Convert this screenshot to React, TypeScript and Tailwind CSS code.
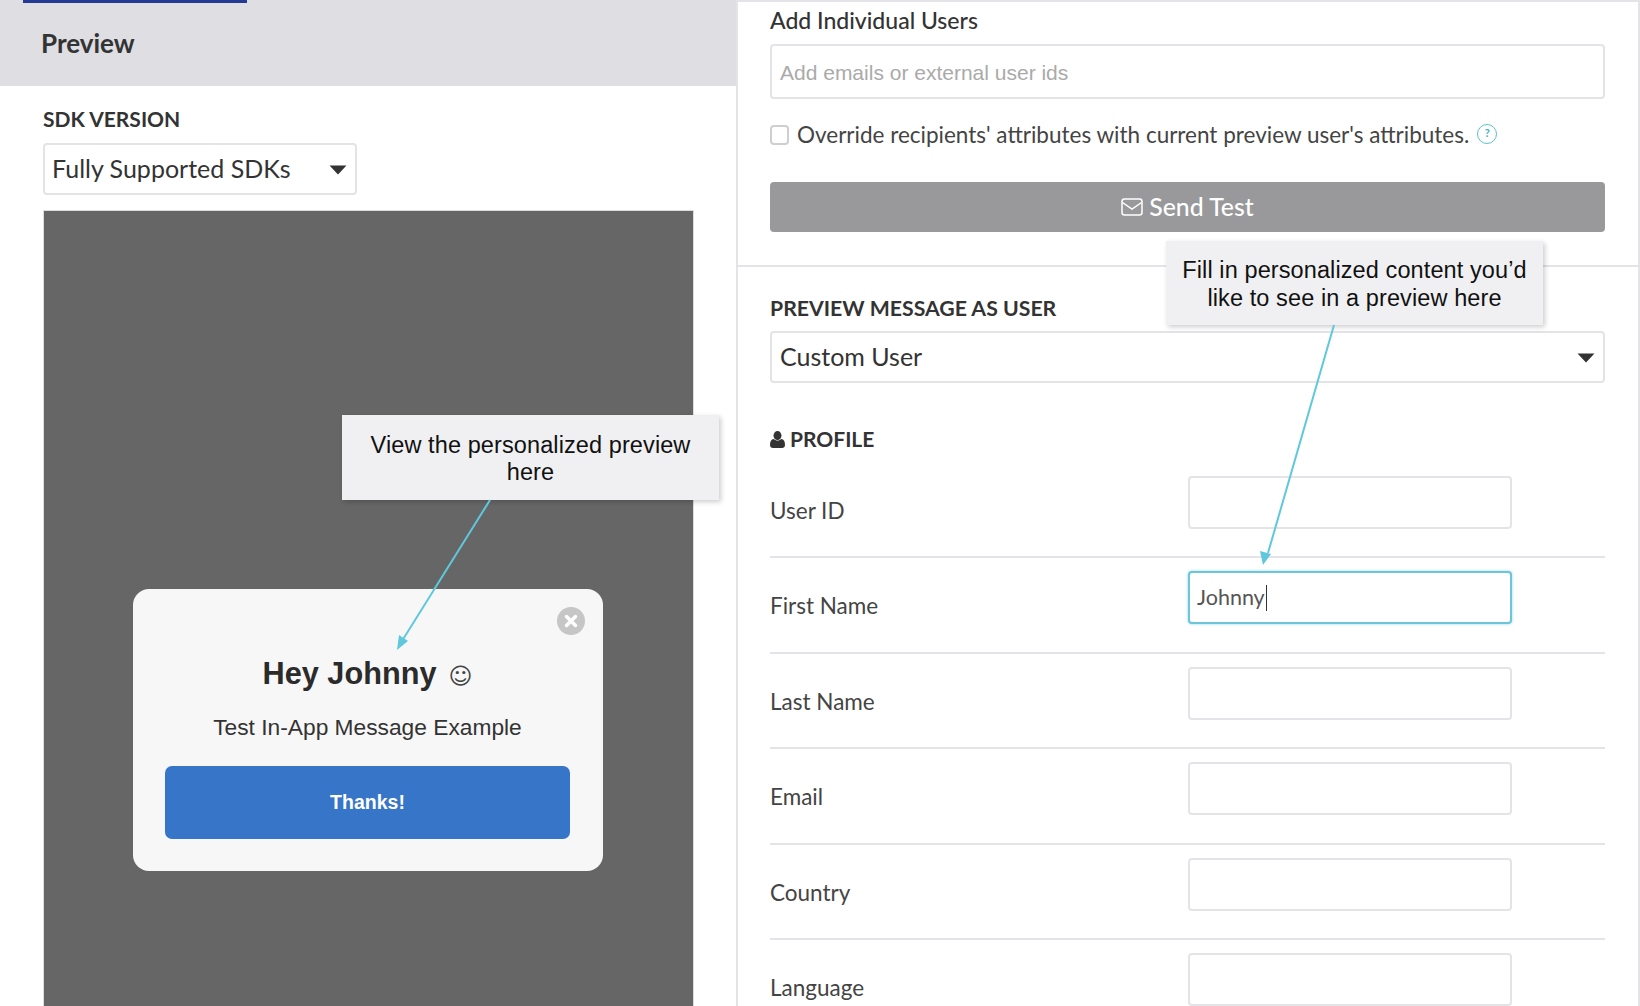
const labelFont = "font-['Lato','Liberation_Sans',sans-serif]";

function Caret() {
  return (
    <svg width="18" height="10" viewBox="0 0 18 10" className="mt-[2px] shrink-0">
      <path d="M0.5 0.5h17L9 9.5z" fill="#333" />
    </svg>
  );
}

function MailIcon() {
  return (
    <svg width="22" height="18" viewBox="0 0 22 18" fill="none" stroke="#fff" strokeWidth="1.5">
      <rect x="1" y="1" width="20" height="16" rx="2.5" />
      <path d="M1.5 4.5 11 11l9.5-6.5" />
    </svg>
  );
}

function UserIcon() {
  return (
    <svg width="15" height="17" viewBox="0 0 15 17" fill="#333">
      <ellipse cx="7.5" cy="4.6" rx="4" ry="4.5" />
      <path d="M0 14c0-3.6 1.2-5.6 3.6-5.9 1 .9 2.4 1.5 3.9 1.5s2.9-.6 3.9-1.5C13.800 8.400 15 10.400 15 14c0 2-1.300 3-3 3H3c-1.700 0-3-1-3-3z" />
    </svg>
  );
}

function Callout({ className, lines }: { className: string; lines: string[] }) {
  return (
    <div
      className={`absolute z-10 flex flex-col items-center justify-center bg-[#f0f0f2] pt-[3px] text-[23.5px] leading-[27.500px] tracking-[0.1px] text-[#111] font-['Liberation_Sans',sans-serif] shadow-[2px_2px_5px_rgba(0,0,0,0.2)] ${className}`}
    >
      {lines.map((line) => (
        <span key={line}>{line}</span>
      ))}
    </div>
  );
}

function ProfileRow({ label, value, last }: { label: string; value?: string; last?: boolean }) {
  const focused = value !== undefined;
  return (
    <div
      className={`flex h-[95.500px] shrink-0 items-start justify-between pr-[93px] pt-[13px] ${last ? "" : "border-b-2 border-[#e4e4e8]"}`}
    >
      <span className="mt-[22px] text-[22.500px] leading-[26px] text-[#444]">{label}</span>
      <div
        className={`flex h-[53px] w-[324px] items-center rounded-[4px] bg-white pl-[7px] text-[21.500px] text-[#555] ${
          focused
            ? "border-2 border-[#6cc5d8] shadow-[0_0_3px_rgba(108,197,216,0.7)]"
            : "border-2 border-[#e4e4e8]"
        }`}
      >
        {value}
        {focused && <span className="ml-px h-[26px] w-px bg-[#333]" />}
      </div>
    </div>
  );
}

export default function App() {
  return (
    <div className={`relative flex h-[1006px] w-[1640px] overflow-hidden bg-white text-[#333] ${labelFont}`}>
      <div className="flex w-[738px] shrink-0 flex-col border-r-2 border-[#e4e4e8]">
        <div className="h-[86px] shrink-0 bg-[#dedee3]">
          <div className="ml-[23px] h-[3px] w-[224px] bg-[#263a93]" />
          <h1 className="pl-[41px] pt-[25px] text-[26px] font-bold leading-[30px] text-[#333]">Preview</h1>
        </div>
        <div className="flex min-h-0 flex-1 flex-col pl-[43px] pt-[21px]">
          <div className="text-[21px] font-bold leading-[24px] text-[#333]">SDK VERSION</div>
          <div className="mt-[12px] flex h-[52px] w-[314px] items-center justify-between rounded-[4px] border-2 border-[#e4e4e8] pl-[7px] pr-[8px] text-[25px]">
            Fully Supported SDKs
            <Caret />
          </div>
          <div className="mt-[15px] flex min-h-0 w-[651px] flex-1 justify-center border border-b-0 border-[#dddddd] bg-[#666666] pr-[2px] pt-[378px]">
            <div className="relative flex h-[282px] w-[470px] flex-col items-center rounded-[16px] bg-[#f7f7f7] font-['Liberation_Sans',sans-serif]">
              <div className="absolute right-[18px] top-[18px] flex h-[28px] w-[28px] items-center justify-center rounded-full bg-[#c6c6c6]">
                <svg width="14" height="14" viewBox="0 0 14 14" stroke="#fff" strokeWidth="3.500" strokeLinecap="round">
                  <path d="M2.500 2.500l9 9M11.500 2.500l-9 9" />
                </svg>
              </div>
              <div className="mt-[64px] flex items-center text-[30.700px] font-bold leading-[36px] text-[#2b2b2b]">
                Hey Johnny
                <span className="ml-[12px] mt-[5px] font-['DejaVu_Sans',sans-serif] text-[23px] font-normal leading-[36px] text-[#444]">☺</span>
              </div>
              <p className="mt-[19px] text-[22.750px] leading-[28px] text-[#333]">Test In-App Message Example</p>
              <div className="mt-[25px] flex h-[73px] w-[405px] items-center justify-center rounded-[7px] bg-[#3675c8] text-[19.500px] font-bold text-white">
                Thanks!
              </div>
            </div>
          </div>
        </div>
      </div>

      <div className="flex min-w-0 flex-1 flex-col border-r-2 border-t-2 border-[#e4e4e8]">
        <div className="h-[265px] shrink-0 border-b-2 border-[#e4e4e8] pl-[32px] pr-[33px] pt-[5px]">
          <div className="text-[23px] font-medium leading-[26px] text-[#333]">Add Individual Users</div>
          <div className="mt-[11px] flex h-[55px] items-center rounded-[4px] border-2 border-[#e4e4e8] pl-[8px] pt-[2px] font-['Liberation_Sans',sans-serif] text-[21px] text-[#aaaaaa]">
            Add emails or external user ids
          </div>
          <div className="mt-[23px] flex items-center">
            <span className="h-[20px] w-[19px] rounded-[4px] border-2 border-[#cfcfd3]" />
            <span className="ml-[8px] text-[22.500px] leading-[26px] text-[#444]">
              Override recipients' attributes with current preview user's attributes.
            </span>
            <span className="ml-[8px] mb-[3px] flex h-[20px] w-[20px] items-center justify-center rounded-full border border-[#5cc2cf] text-[11px] font-bold text-[#3bb3c3]">
              ?
            </span>
          </div>
          <div className="mt-[34px] flex h-[50px] items-center justify-center gap-[6px] rounded-[4px] bg-[#99999b] text-[24.800px] font-medium text-white">
            <MailIcon />
            Send Test
          </div>
        </div>

        <div className="flex min-h-0 flex-1 flex-col pl-[32px] pr-[33px] pt-[29px]">
          <div className="text-[21.250px] font-bold leading-[24px] text-[#333]">PREVIEW MESSAGE AS USER</div>
          <div className="mt-[11px] flex h-[52px] shrink-0 items-center justify-between rounded-[4px] border-2 border-[#e4e4e8] pl-[8px] pr-[8px] text-[25px]">
            Custom User
            <Caret />
          </div>
          <div className="mt-[44px] flex shrink-0 items-center gap-[5px] text-[21px] font-bold leading-[24px]">
            <UserIcon />
            PROFILE
          </div>
          <div className="-mr-[33px] mt-[11.500px] flex flex-col pr-[33px]">
            <ProfileRow label="User ID" />
            <ProfileRow label="First Name" value="Johnny" />
            <ProfileRow label="Last Name" />
            <ProfileRow label="Email" />
            <ProfileRow label="Country" />
            <ProfileRow label="Language" last />
          </div>
        </div>
      </div>

      <Callout className="left-[342px] top-[415px] h-[85px] w-[377px]" lines={["View the personalized preview", "here"]} />
      <Callout className="left-[1166px] top-[241px] h-[84px] w-[377px]" lines={["Fill in personalized content you’d", "like to see in a preview here"]} />

      <svg className="pointer-events-none absolute inset-0 z-10" width="1640" height="1006" fill="none">
        <path d="M490 500 402 641" stroke="#5fc8dc" strokeWidth="2" />
        <path d="M397 650l2-15 9 6z" fill="#5fc8dc" />
        <path d="M1334 325 1268 553" stroke="#5fc8dc" strokeWidth="2" />
        <path d="M1263 565l-3-14 11 3z" fill="#5fc8dc" />
      </svg>
    </div>
  );
}
